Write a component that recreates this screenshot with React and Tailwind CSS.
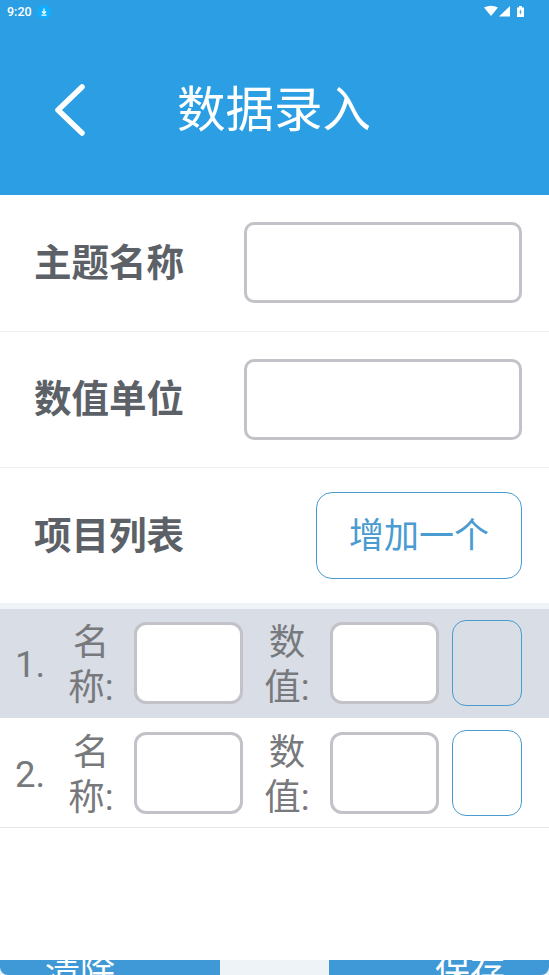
import React from "react";

const TextRow = ({ label }) => (
  <div className="flex h-[136.5px] items-center justify-between border-b border-[#f0f1f3] pl-[34px] pr-[27px]">
    <span className="text-[37.5px] font-bold text-[#5c6168]">{label}</span>
    <input className="h-[81px] w-[278px] rounded-[10px] border-[3px] border-[#c2c2c8] bg-white" />
  </div>
);

const SmallField = ({ label }) => (
  <>
    <span className="w-[50px] shrink-0 pt-[4px] text-center text-[36.5px] leading-[45px] text-[#77797c]">{label}</span>
    <input className="ml-[18px] h-[82px] w-[109px] rounded-[12px] border-[3px] border-[#c2c2c8] bg-white" />
  </>
);

const ItemRow = ({ num, active }) => (
  <div className={`flex items-center pl-[15px] pr-[27px] ${active ? "h-[109px] bg-[#d8dde6] pb-[1px]" : "h-[110px] border-b border-[#e6e7ea] bg-white"}`}>
    <span className="w-[51px] shrink-0 pt-[5px] text-[36.5px] text-[#77797c]">{num}.</span>
    <SmallField label="名称:" />
    <span className="w-[19px] shrink-0" />
    <SmallField label="数值:" />
    <button className="ml-[13px] h-[86px] w-[70px] shrink-0 rounded-[14px] border border-[#4a9bd0]" />
  </div>
);

export default function App() {
  return (
    <div className="flex h-[975px] w-[549px] flex-col overflow-hidden bg-white font-['Roboto','Noto_Sans_CJK_SC',sans-serif]">
      <header className="h-[195px] shrink-0 bg-[#2b9ee4] text-white">
        <div className="flex h-[24px] items-center justify-between pl-[7px] pr-[24px]">
          <div className="flex items-center gap-[5px]">
            <span className="text-[12.5px] font-medium leading-none">9:20</span>
            <svg width="14" height="14" viewBox="0 0 14 14">
              <circle cx="7" cy="7" r="7" fill="#10aeff" />
              <path d="M7 3.5v5M5 6.5l2 2 2-2M4.5 10.2h5" stroke="#fff" strokeWidth="1.2" fill="none" />
            </svg>
          </div>
          <svg width="41" height="14" viewBox="0 0 41 14">
            <path d="M0 2.5Q7-1 14 2.5L7 11Z" fill="#fff" />
            <path d="M15 11.500L26 1v10.500Z" fill="#fff" />
            <path d="M33 2.500h2V1h3v1.500h2V12h-7Z" fill="#fff" />
            <path d="M36.800 4l-1.500 3.500h1v2.500l1.500-3.500h-1Z" fill="#2b9ee4" />
          </svg>
        </div>
        <div className="flex h-[171px] items-center pl-[53px]">
          <svg width="34" height="54" viewBox="0 0 34 54" fill="none">
            <path d="M29 4L5 27l24 23" stroke="#fff" strokeWidth="5.500" strokeLinecap="round" strokeLinejoin="round" />
          </svg>
          <h1 className="ml-[90px] pt-[3px] text-[48.500px] font-normal leading-none">数据录入</h1>
        </div>
      </header>

      <TextRow label="主题名称" />
      <TextRow label="数值单位" />
      <div className="flex h-[135px] items-center justify-between pl-[34px] pr-[27px]">
        <span className="pt-[1px] text-[37.5px] font-bold text-[#5c6168]">项目列表</span>
        <button className="h-[87px] w-[206px] rounded-[16px] border border-[#4a9bd0] pt-[3px] text-[35px] text-[#4a9bd0]">增加一个</button>
      </div>

      <div className="h-[6px] shrink-0 bg-[#eef3f7]" />
      <ItemRow num="1" active />
      <ItemRow num="2" />

      <div className="mt-auto flex h-[15px] justify-between overflow-hidden bg-[#eef3f7]">
        <button className="w-[220px] rounded-bl-[8px] bg-[#3f99d6] pl-[45px] pt-[5px] text-left text-[35px] leading-[15px] text-white">清除</button>
        <button className="w-[220px] rounded-br-[8px] bg-[#3f99d6] pl-[106px] pt-[5px] text-left text-[35px] leading-[15px] text-white">保存</button>
      </div>
    </div>
  );
}
